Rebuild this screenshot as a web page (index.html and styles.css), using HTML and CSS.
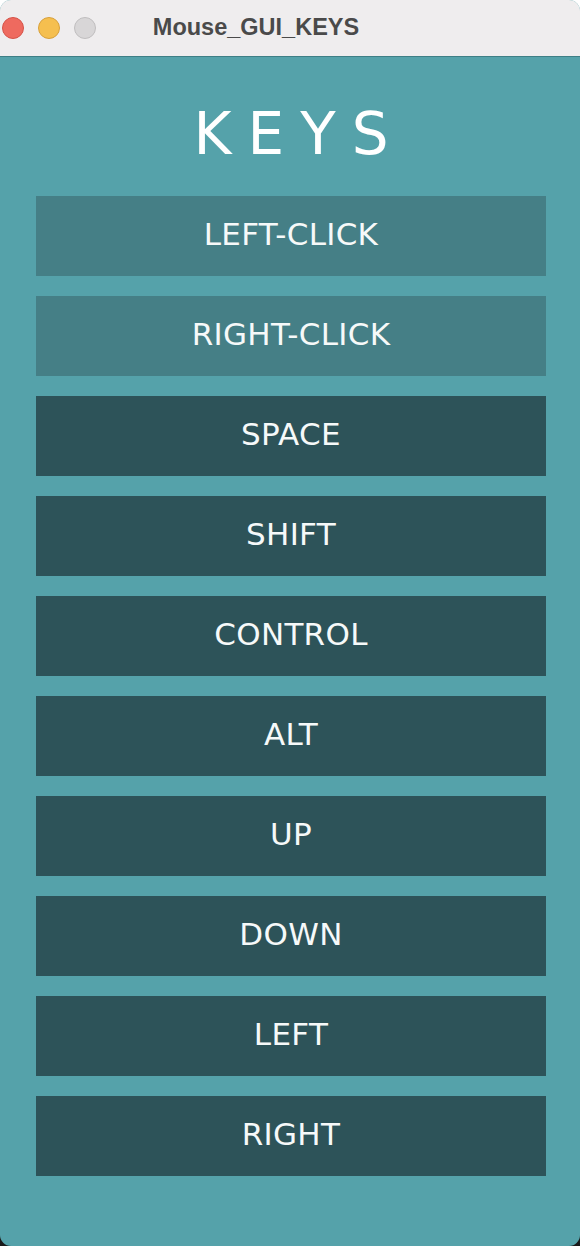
FILE: index.html
```html
<!DOCTYPE html>
<html>
<head>
<meta charset="utf-8">
<link rel="stylesheet" href="styles.css">
</head>
<body>
<div class="window">
  <div class="titlebar">
    <div class="lights">
      <span class="light red"></span>
      <span class="light yellow"></span>
      <span class="light gray"></span>
    </div>
    <div class="title">Mouse_GUI_KEYS</div>
  </div>
  <div class="content">
    <h1 class="heading">KEYS</h1>
    <div class="keys">
      <div class="key light-key">LEFT-CLICK</div>
      <div class="key light-key">RIGHT-CLICK</div>
      <div class="key">SPACE</div>
      <div class="key">SHIFT</div>
      <div class="key">CONTROL</div>
      <div class="key">ALT</div>
      <div class="key">UP</div>
      <div class="key">DOWN</div>
      <div class="key">LEFT</div>
      <div class="key">RIGHT</div>
    </div>
  </div>
</div>
</body>
</html>
```
FILE: styles.css
```css
html {
  background: linear-gradient(#ffffff 50%, #1a1a1a 50%);
}
body {
  margin: 0;
  width: 580px;
  height: 1246px;
  overflow: hidden;
}
.window {
  width: 580px;
  height: 1246px;
  border-radius: 11px;
  overflow: hidden;
  display: flex;
  flex-direction: column;
  background: #55a2aa;
}
.titlebar {
  height: 56px;
  flex: none;
  background: #efedee;
  border-bottom: 1px solid #3e7f86;
  display: flex;
  align-items: center;
  position: relative;
}
.lights {
  display: flex;
  gap: 14px;
  padding-left: 2px;
  margin-top: 0;
}
.light {
  width: 22px;
  height: 22px;
  border-radius: 50%;
  box-sizing: border-box;
}
.red { background: #ee6a5f; border: 1px solid #d65247; }
.yellow { background: #f5bf4f; border: 1px solid #d8a03a; }
.gray { background: #d8d6d7; border: 1px solid #c0bebf; }
.title {
  position: absolute;
  left: 0;
  right: 0;
  top: 13px;
  text-align: center;
  font-family: "Liberation Sans", Arial, sans-serif;
  font-weight: bold;
  font-size: 23.5px;
  line-height: 28px;
  color: #4a4a4a;
  padding-right: 68px;
}
.content {
  flex: 1;
  display: flex;
  flex-direction: column;
  align-items: center;
  padding-left: 2px;
}
.heading {
  margin: 0;
  height: 139px;
  box-sizing: border-box;
  padding-top: 48px;
  font-family: "DejaVu Sans", sans-serif;
  font-weight: normal;
  font-size: 58px;
  line-height: 58px;
  letter-spacing: 16px;
  margin-right: -16px;
  color: #ffffff;
}
.keys {
  display: flex;
  flex-direction: column;
  gap: 20px;
  width: 510px;
}
.key {
  height: 80px;
  background: #2d5359;
  color: #f6f9f9;
  font-family: "DejaVu Sans", sans-serif;
  font-size: 31px;
  display: flex;
  align-items: center;
  justify-content: center;
  padding-bottom: 4px;
  box-sizing: border-box;
  letter-spacing: 0.3px;
}
.light-key {
  background: #457f86;
}
```
